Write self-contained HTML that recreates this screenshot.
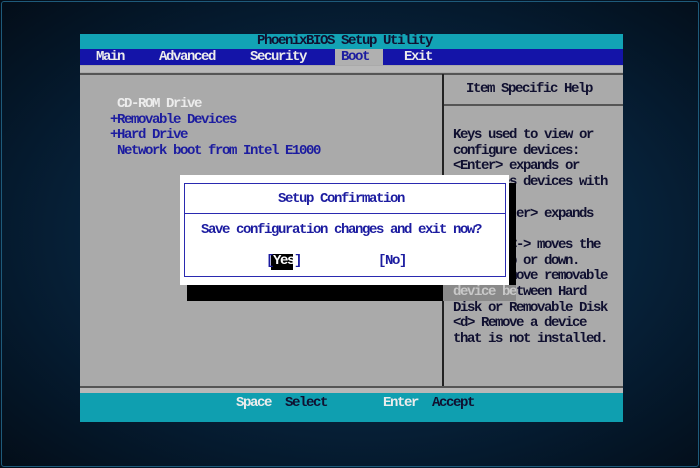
<!DOCTYPE html>
<html><head><style>
html,body{margin:0;padding:0;width:700px;height:468px;overflow:hidden}
body{background:radial-gradient(ellipse at 52% 50%,#0d3a5c 0%,#082a46 35%,#051a2e 70%,#030d18 100%);position:relative;font-family:"Liberation Mono",monospace;font-size:14px;letter-spacing:-1.4px;font-weight:bold}
.frame{position:absolute;left:1px;top:1px;right:1px;bottom:1px;border:1px solid #1e5a7a;border-radius:3px}
.a{position:absolute;white-space:pre;line-height:15px}
.box{position:absolute}
.b{color:#1c1ca0}.w{color:#ececec}.k{color:#101030}
</style></head><body>
<div class="frame"></div>
<div class="box" style="left:80px;top:34px;width:543px;height:15px;background:#12a3b5"></div>
<div class="box" style="left:80px;top:49px;width:543px;height:16px;background:#1414a8"></div>
<div class="box" style="left:335px;top:49px;width:48px;height:16px;background:#b0b0b0"></div>
<div class="box" style="left:80px;top:65px;width:543px;height:322px;background:#aaaaaa"></div>
<div class="box" style="left:80px;top:66px;width:543px;height:6px;background:#b8b8b8"></div>
<div class="box" style="left:80px;top:73px;width:543px;height:2px;background:#555"></div>
<div class="box" style="left:442px;top:74px;width:2px;height:313px;background:#222"></div>
<div class="box" style="left:444px;top:104px;width:179px;height:2px;background:#555"></div>
<div class="box" style="left:80px;top:386px;width:543px;height:2px;background:#555"></div>
<div class="box" style="left:80px;top:388px;width:543px;height:5px;background:#b8b8b8"></div>
<div class="box" style="left:80px;top:393px;width:543px;height:29px;background:#0f9fb0"></div>

<div class="a k" style="left:257px;top:34px">PhoenixBIOS Setup Utility</div>
<div class="a w" style="left:96px;top:50px">Main</div>
<div class="a w" style="left:159px;top:50px">Advanced</div>
<div class="a w" style="left:250px;top:50px">Security</div>
<div class="a b" style="left:341px;top:50px">Boot</div>
<div class="a w" style="left:404px;top:50px">Exit</div>

<div class="a w" style="left:117px;top:97px">CD-ROM Drive</div>
<div class="a b" style="left:110px;top:113px">+Removable Devices</div>
<div class="a b" style="left:110px;top:128px">+Hard Drive</div>
<div class="a b" style="left:117px;top:144px">Network boot from Intel E1000</div>

<div class="a k" style="left:466px;top:82px">Item Specific Help</div>
<div class="a k" style="left:453px;top:128px;line-height:15.7px">Keys used to view or
configure devices:
&lt;Enter&gt; expands or
collapses devices with
a + or -
&lt;Ctrl+Enter&gt; expands
all
&lt;+&gt; and &lt;-&gt; moves the
device up or down.
&lt;n&gt; May move removable
device between Hard
Disk or Removable Disk
&lt;d&gt; Remove a device
that is not installed.</div>

<div class="box" style="left:187px;top:285px;width:256px;height:16px;background:#000"></div>
<div class="box" style="left:443px;top:285px;width:73px;height:16px;background:#8a8a8a"></div>
<div class="a" style="left:453px;top:285px;color:#c8c8c8">device be</div>
<div class="box" style="left:509px;top:183px;width:7px;height:102px;background:#000"></div>
<div class="box" style="left:180px;top:175px;width:329px;height:110px;background:#fff"></div>
<div class="box" style="left:184px;top:183px;width:320px;height:92px;border:1px solid #2a2ab0"></div>
<div class="box" style="left:185px;top:213px;width:320px;height:1px;background:#2a2ab0"></div>
<div class="a b" style="left:278px;top:192px">Setup Confirmation</div>
<div class="a b" style="left:201px;top:223px">Save configuration changes and exit now?</div>
<div class="box" style="left:271px;top:254px;width:22px;height:16px;background:#000"></div>
<div class="a b" style="left:266px;top:254px">[<span style="color:#fff">Yes</span>]</div>
<div class="a b" style="left:378px;top:254px">[No]</div>

<div class="a w" style="left:236px;top:396px">Space</div>
<div class="a k" style="left:285px;top:396px">Select</div>
<div class="a w" style="left:383px;top:396px">Enter</div>
<div class="a k" style="left:432px;top:396px">Accept</div>
</body></html>
